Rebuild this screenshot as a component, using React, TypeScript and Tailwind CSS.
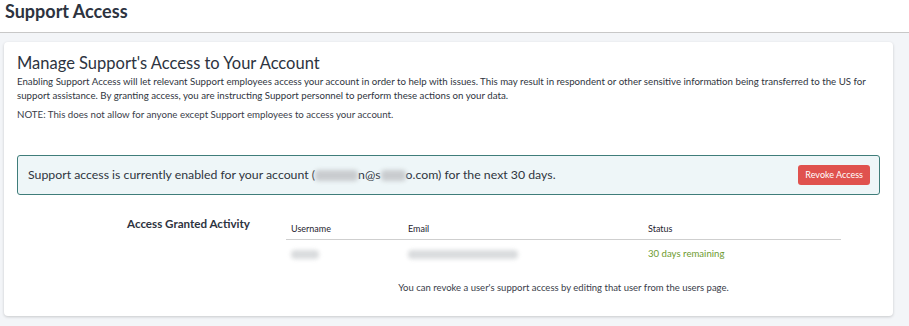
import React from "react";

function Redact({ w, h = 10, className = "" }: { w: number; h?: number; className?: string }) {
  return (
    <span
      className={`inline-block align-middle rounded-sm bg-[#c9cccf] blur-[2px] ${className}`}
      style={{ width: w, height: h }}
    />
  );
}

export default function App() {
  return (
    <div className="w-[909px] h-[326px] bg-[#f3f5f8] text-[#2f3540] overflow-hidden" style={{ fontFamily: "Lato, 'Open Sans', sans-serif" }}>
      <div className="h-[33px] bg-white border-b border-[#c8c8c8] pl-[5px] flex items-center">
        <h1 className="text-[18px] font-bold leading-none text-[#2d3340] -mt-[10px]">Support Access</h1>
      </div>
      <div className="pt-[9px] pl-[4px] pr-[16px]">
        <div className="bg-white shadow-[0_1px_3px_rgba(0,0,0,0.18)] rounded-sm h-[274px] px-[13px] pt-[10px]">
          <h2 className="text-[16.5px] leading-[22px] text-[#2d3340]">Manage Support's Access to Your Account</h2>
          <p className="text-[9.7px] leading-[14px] mt-0 text-[#2f3540]">
            Enabling Support Access will let relevant Support employees access your account in order to help with issues. This may result in respondent or other sensitive information being transferred to the US for support assistance. By granting access, you are instructing Support personnel to perform these actions on your data.
          </p>
          <p className="text-[9.7px] leading-[14px] mt-[5px] text-[#3a404a]">
            NOTE: This does not allow for anyone except Support employees to access your account.
          </p>
          <div className="mt-[34px] h-[40px] border border-[#3f7d7a] rounded-[3px] bg-[#eef6f8] flex items-center justify-between pl-[10px] pr-[9px]">
            <span className="text-[12.3px] text-[#2f3540]">
              Support access is currently enabled for your account (<Redact w={43} h={11} />n@s<Redact w={25} h={11} />o.com) for the next 30 days.
            </span>
            <button className="h-[20px] px-[7px] rounded-[3px] bg-[#e0524e] text-white text-[9px]">Revoke Access</button>
          </div>
          <div className="flex mt-[25px]">
            <div className="w-[269px] pl-[110px] -mt-[5px] text-[11.6px] font-bold text-[#2d3340]">Access Granted Activity</div>
            <div className="flex flex-col">
              <div className="w-[555px]">
                <div className="flex h-[15px] items-end pl-[5px] text-[9px] text-[#1f2430] border-b border-[#cfcfcf] pb-[4px] box-content">
                  <span className="w-[117px]">Username</span>
                  <span className="w-[240px]">Email</span>
                  <span>Status</span>
                </div>
                <div className="flex h-[28px] items-center pl-[5px] text-[9px]">
                  <span className="w-[117px]"><Redact w={28} h={9} className="opacity-70" /></span>
                  <span className="w-[240px]"><Redact w={110} h={9} className="opacity-70" /></span>
                  <span className="text-[#6e9b2f] text-[9.6px]">30 days remaining</span>
                </div>
              </div>
              <p className="mt-[13px] text-[9.5px] text-[#3a404a] text-center w-[555px]">
                You can revoke a user's support access by editing that user from the users page.
              </p>
            </div>
          </div>
        </div>
      </div>
    </div>
  );
}
